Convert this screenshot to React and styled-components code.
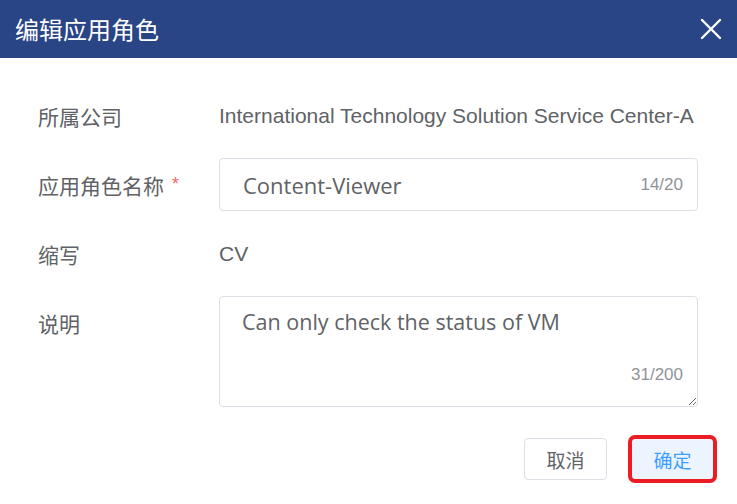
import React from 'react'
import styled, { createGlobalStyle } from 'styled-components'

const GlobalStyle = createGlobalStyle`
  html, body {
    margin: 0;
    padding: 0;
    background: #fff;
  }
  body {
    font-family: "Liberation Sans", "Noto Sans CJK SC", sans-serif;
  }
`

const Dialog = styled.div`
  width: 737px;
  height: 504px;
  background: #fff;
  overflow: hidden;
`

const Header = styled.div`
  height: 58px;
  background: #2a4586;
  display: flex;
  align-items: center;
  justify-content: space-between;
  padding: 0 14px 0 15px;
`

const Title = styled.div`
  color: #fff;
  font-size: 24px;
  font-family: "Noto Sans CJK SC", sans-serif;
  line-height: 1;
`

const CloseButton = styled.button`
  border: 0;
  background: transparent;
  padding: 0;
  width: 24px;
  height: 24px;
  display: flex;
  align-items: center;
  justify-content: center;
  cursor: pointer;
`

const Form = styled.div`
  display: grid;
  grid-template-columns: 181px 479px;
  row-gap: 16px;
  padding: 31px 0 0 38px;
`

const Label = styled.div`
  min-height: 53px;
  display: flex;
  align-items: ${props => (props.top ? 'flex-start' : 'center')};
  padding-top: ${props => (props.top ? '12px' : '0')};
  box-sizing: border-box;
  color: #606266;
  font-size: 21px;
  font-family: "Noto Sans CJK SC", sans-serif;
`

const Required = styled.span`
  color: #f56c6c;
  margin-left: 8px;
  font-family: "Liberation Sans", sans-serif;
  font-size: 18px;
`

const Value = styled.div`
  min-height: 53px;
  display: flex;
  align-items: center;
  color: #606266;
  font-size: 21px;
  font-family: "Liberation Sans", sans-serif;
  white-space: nowrap;
`

const Field = styled.div`
  position: relative;
`

const Input = styled.input`
  width: 100%;
  height: 53px;
  box-sizing: border-box;
  border: 1px solid #dcdfe6;
  border-radius: 4px;
  padding: 0 80px 0 23px;
  font-size: 22px;
  font-family: "Open Sans", sans-serif;
  color: #606266;
  outline: none;
`

const TextArea = styled.textarea`
  display: block;
  width: 100%;
  height: 111px;
  box-sizing: border-box;
  border: 1px solid #dcdfe6;
  border-radius: 4px;
  padding: 10px 22px;
  font-size: 21.5px;
  line-height: 30px;
  font-family: "Open Sans", sans-serif;
  color: #606266;
  outline: none;
  resize: vertical;
`

const Counter = styled.span`
  position: absolute;
  right: 15px;
  color: #909399;
  font-size: 17px;
  font-family: "Liberation Sans", sans-serif;
  ${props => (props.bottom ? 'bottom: 22px;' : 'top: 50%; transform: translateY(-50%);')}
`

const Footer = styled.div`
  display: flex;
  justify-content: flex-end;
  gap: 24px;
  padding: 31px 23px 0 0;
`

const Button = styled.button`
  width: 83px;
  height: 42px;
  box-sizing: border-box;
  border-radius: 4px;
  border: 1px solid ${props => (props.primary ? '#b3d8ff' : '#dcdfe6')};
  background: ${props => (props.primary ? '#ecf5ff' : '#fff')};
  color: ${props => (props.primary ? '#409eff' : '#606266')};
  font-size: 19px;
  font-family: "Noto Sans CJK SC", sans-serif;
  padding: 0;
  outline: ${props => (props.highlight ? '4px solid #ec1c24' : 'none')};
  outline-offset: -1px;
`

const CloseIcon = () => (
  <svg width="22" height="22" viewBox="0 0 22 22">
    <path d="M2 2 L20 20 M20 2 L2 20" stroke="#fff" strokeWidth="2.4" strokeLinecap="round" />
  </svg>
)

export default function App () {
  return (
    <>
      <GlobalStyle />
      <Dialog>
        <Header>
          <Title>编辑应用角色</Title>
          <CloseButton aria-label='close'><CloseIcon /></CloseButton>
        </Header>
        <Form>
          <Label>所属公司</Label>
          <Value>International Technology Solution Service Center-A</Value>

          <Label>应用角色名称<Required>*</Required></Label>
          <Field>
            <Input defaultValue='Content-Viewer' />
            <Counter>14/20</Counter>
          </Field>

          <Label>缩写</Label>
          <Value>CV</Value>

          <Label top>说明</Label>
          <Field>
            <TextArea defaultValue='Can only check the status of VM' />
            <Counter bottom>31/200</Counter>
          </Field>
        </Form>
        <Footer>
          <Button>取消</Button>
          <Button primary highlight>确定</Button>
        </Footer>
      </Dialog>
    </>
  )
}
